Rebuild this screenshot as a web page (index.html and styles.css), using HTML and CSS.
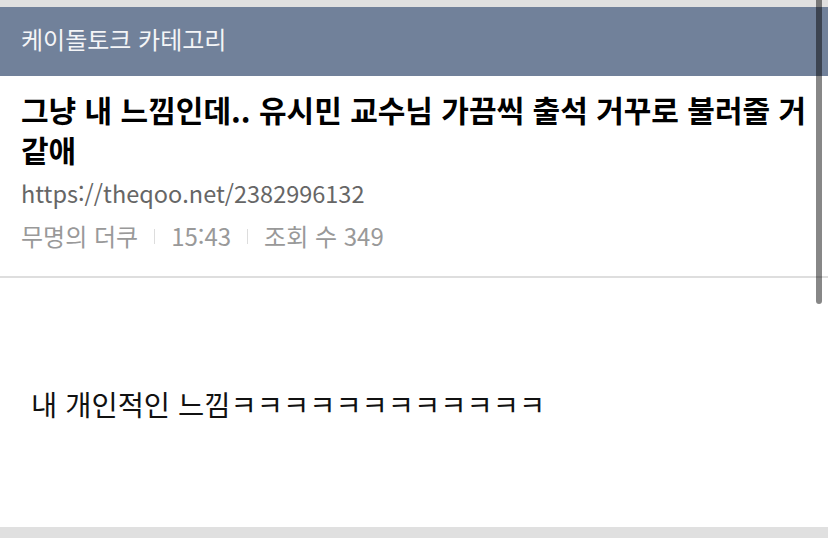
FILE: index.html
```html
<!DOCTYPE html>
<html lang="ko">
<head>
    <meta charset="UTF-8">
    <meta name="viewport" content="width=device-width, initial-scale=1.0">
    <title>케이돌토크 카테고리</title>
    <link rel="stylesheet" href="styles.css">
</head>
<body>

    <div class="page">
        <div class="top-strip"></div>

        <div class="category-bar">케이돌토크 카테고리</div>

        <div class="post-head">
            <h1 class="post-title">그냥 내 느낌인데.. 유시민 교수님 가끔씩 출석 거꾸로 불러줄 거 같애</h1>
            <div class="post-url">https://theqoo.net/2382996132</div>
            <div class="post-meta">
                <span>무명의 더쿠</span>
                <span class="sep"></span>
                <span>15:43</span>
                <span class="sep"></span>
                <span>조회 수 349</span>
            </div>
        </div>

        <div class="post-body">
            <p>내 개인적인 느낌ㅋㅋㅋㅋㅋㅋㅋㅋㅋㅋㅋㅋ</p>
        </div>

        <div class="bottom-strip"></div>

        <!-- 스크롤 표시 -->
        <div class="scroll-thumb"></div>
    </div>

</body>
</html>
```

FILE: styles.css
```css
html, body {
    margin: 0;
    padding: 0;
    background-color: #fff;
}

body {
    font-family: "Noto Sans CJK KR", "Noto Sans", sans-serif;
    color: #111;
}

.page {
    position: relative;
    height: 538px;
    display: flex;
    flex-direction: column;
    overflow: hidden;
}

.top-strip {
    height: 7px;
    background-color: #e0e0e0;
}

.category-bar {
    height: 63px;
    display: flex;
    align-items: center;
    padding: 0 0 6px 21px;
    background-color: #71819a;
    color: #f4f5f7;
    font-size: 24px;
}

.post-head {
    padding: 13px 21px 24px;
    border-bottom: 2px solid #dedede;
}

.post-title {
    margin: 0;
    font-size: 30px;
    font-weight: bold;
    line-height: 40px;
    color: #000;
}

.post-url {
    margin-top: 8px;
    font-size: 23.5px;
    line-height: 32px;
    color: #666;
}

.post-meta {
    display: flex;
    align-items: center;
    gap: 16px;
    margin-top: 11px;
    font-size: 24px;
    line-height: 32px;
    color: #999;
}

.sep {
    width: 1px;
    height: 15px;
    background-color: #ddd;
}

.post-body {
    flex: 1;
    padding: 0 31px;
}

.post-body p {
    margin: 108px 0 0;
    font-size: 28.5px;
    line-height: 36px;
    color: #111;
}

.bottom-strip {
    height: 11px;
    background-color: #e0e0e0;
}

.scroll-thumb {
    position: absolute;
    top: -10px;
    left: 816px;
    width: 6px;
    height: 314px;
    border-radius: 3px;
    background-color: rgba(0, 0, 0, 0.47);
}
```
